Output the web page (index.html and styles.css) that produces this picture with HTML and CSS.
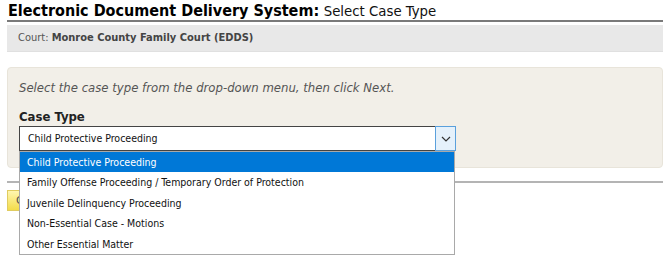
FILE: index.html
```html
<!DOCTYPE html>
<html>
<head>
<meta charset="utf-8">
<link rel="stylesheet" href="styles.css">
</head>
<body>
<div class="page">
  <h1 class="title"><b>Electronic Document Delivery System:</b> <span class="sub">Select Case Type</span></h1>
  <div class="court">Court: <b>Monroe County Family Court (EDDS)</b></div>
  <div class="panel">
    <p class="hint">Select the case type from the drop-down menu, then click Next.</p>
    <div class="label">Case Type</div>
    <div class="selectwrap">
      <div class="select">
        <span class="value">Child Protective Proceeding</span>
        <span class="arrow"><svg width="10" height="6" viewBox="0 0 10 6"><path d="M1 1 L5 5 L9 1" fill="none" stroke="#333" stroke-width="1.2"/></svg></span>
      </div>
      <ul class="list">
        <li class="sel">Child Protective Proceeding</li>
        <li>Family Offense Proceeding / Temporary Order of Protection</li>
        <li>Juvenile Delinquency Proceeding</li>
        <li>Non-Essential Case - Motions</li>
        <li>Other Essential Matter</li>
      </ul>
    </div>
  </div>
  <div class="rule"></div>
  <div class="buttons"><span class="btn">Cancel</span></div>
</div>
</body>
</html>
```
FILE: styles.css
```css
html, body { margin: 0; padding: 0; background: #fff; }
body { font-family: "DejaVu Sans", Verdana, sans-serif; color: #222; min-height: 267px; }
.page { width: 656px; margin-left: 7px; min-height: 267px; }
.title {
  margin: 0;
  padding: 2px 0 0 1px;
  height: 18px;
  font-family: "DejaVu Sans Condensed", "DejaVu Sans", sans-serif;
  font-size: 16px;
  line-height: 18px;
  font-weight: normal;
  color: #000;
  border-bottom: 2px solid #7a7a7a;
  white-space: nowrap;
}
.title b { font-weight: bold; }
.sub { color: #111; font-size: 14.8px; }
.court {
  margin-top: 3px;
  height: 26px;
  line-height: 26px;
  background: #e8e8e8;
  border-bottom: 1px solid #e0e0e0;
  padding-left: 11px;
  font-family: "DejaVu Sans Condensed", "DejaVu Sans", sans-serif;
  font-size: 11px;
  color: #555;
}
.court b { color: #444; }
.panel {
  margin-top: 15px;
  height: 99px;
  background: #f2efe8;
  border: 1px solid #e8e4da;
  border-radius: 4px;
  padding: 0 11px;
}
.hint {
  margin: 12px 0 0 0;
  font-size: 11.7px;
  line-height: 16px;
  font-style: italic;
  color: #555;
}
.label {
  margin-top: 13px;
  font-family: "DejaVu Sans Condensed", "DejaVu Sans", sans-serif;
  font-size: 13px;
  font-weight: bold;
  line-height: 16px;
  color: #222;
}
.selectwrap { position: relative; width: 437px; margin-top: 1px; }
.select {
  display: flex;
  height: 23px;
  border: 1px solid #444;
  border-right: none;
  background: #fff;
}
.value {
  flex: 1;
  padding-left: 8px;
  line-height: 23px;
  font-family: "DejaVu Sans Condensed", "DejaVu Sans", sans-serif;
  font-size: 10.5px;
  color: #111;
}
.arrow {
  width: 19px;
  margin: -1px 0;
  display: flex;
  align-items: center;
  justify-content: center;
  background: #e5f1fb;
  border: 1px solid #5aa0dc;
}
.list {
  position: absolute;
  z-index: 5;
  left: 0;
  top: 25px;
  width: 434px;
  margin: 0;
  padding: 0;
  list-style: none;
  background: #fff;
  border: 1px solid #a9a9a9;
  font-family: "DejaVu Sans Condensed", "DejaVu Sans", sans-serif;
  font-size: 10.5px;
  color: #111;
}
.list li { height: 20.4px; line-height: 20px; padding-left: 7px; }
.list li.sel { background: #0078d7; color: #fff; }
.rule { margin-top: 13px; height: 2px; background: #b4b4b4; }
.buttons { margin-top: 6px; }
.btn {
  display: inline-block;
  height: 19px;
  line-height: 19px;
  padding: 0 8px;
  background: linear-gradient(#fff6b0, #f3dc4a);
  border: 1px solid #e0cc60;
  font-size: 11px;
  color: #555;
}
```
